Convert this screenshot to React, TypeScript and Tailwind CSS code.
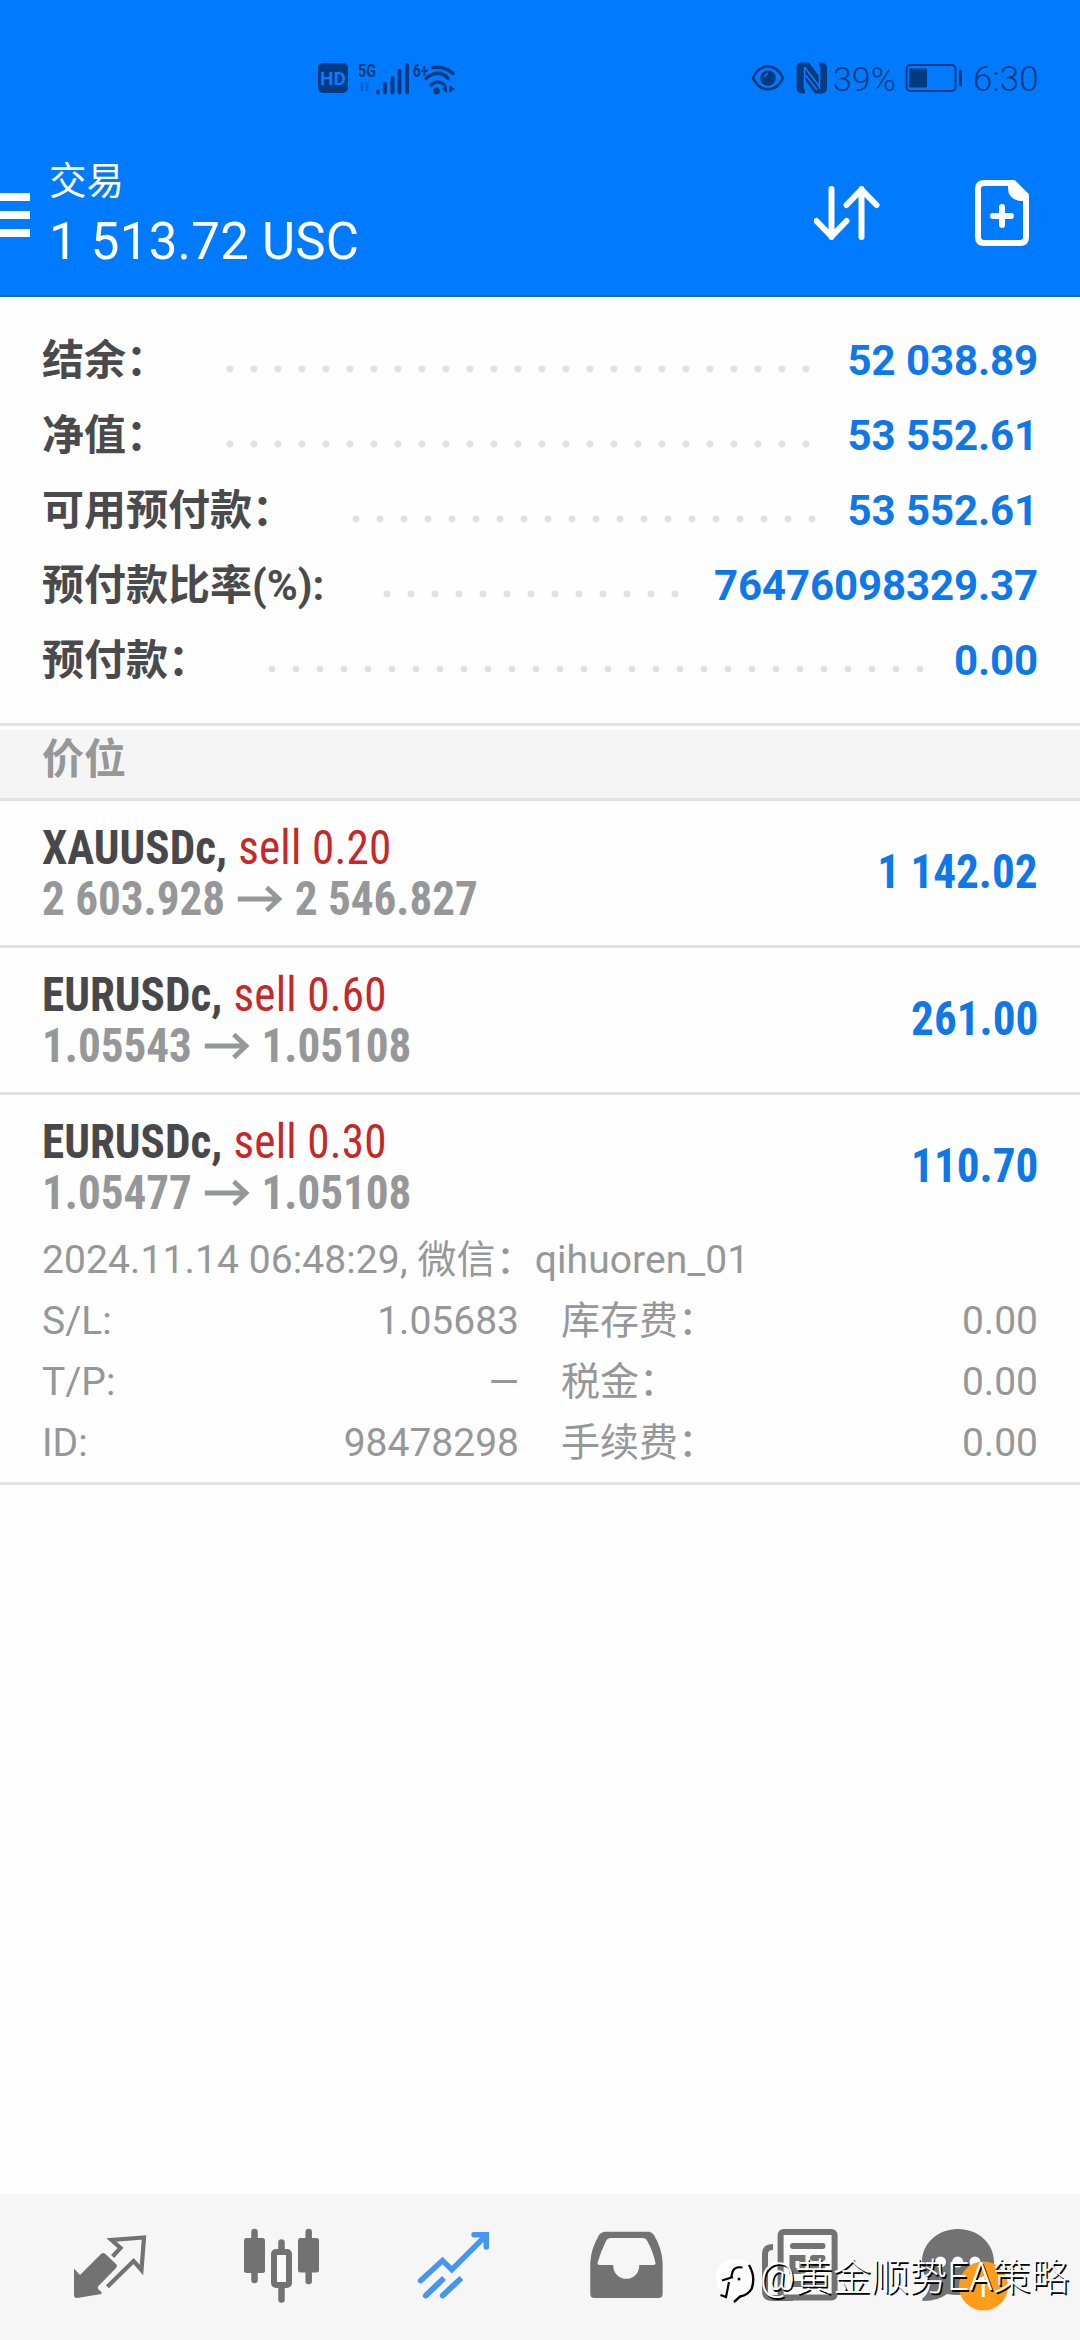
/**
 * TradeScreen - open positions view of a mobile trading terminal
 * Header with floating profit, account summary, positions list, bottom tabs.
 */

import type { ReactNode } from 'react'

interface SummaryItem {
  label: string
  value: string
  labelClass: string
  dots: number
}

interface Position {
  symbol: string
  side: string
  open: string
  current: string
  profit: string
}

const SUMMARY: SummaryItem[] = [
  { label: '结余：', value: '52 038.89', labelClass: 'w-[176px]', dots: 25 },
  { label: '净值：', value: '53 552.61', labelClass: 'w-[176px]', dots: 25 },
  { label: '可用预付款：', value: '53 552.61', labelClass: 'w-[302px]', dots: 20 },
  { label: '预付款比率(%):', value: '76476098329.37', labelClass: 'w-[333px]', dots: 13 },
  { label: '预付款：', value: '0.00', labelClass: 'w-[218px]', dots: 28 }
]

const POSITIONS: Position[] = [
  { symbol: 'XAUUSDc,', side: 'sell 0.20', open: '2 603.928', current: '2 546.827', profit: '1 142.02' },
  { symbol: 'EURUSDc,', side: 'sell 0.60', open: '1.05543', current: '1.05108', profit: '261.00' },
  { symbol: 'EURUSDc,', side: 'sell 0.30', open: '1.05477', current: '1.05108', profit: '110.70' }
]

const DETAILS = [
  ['S/L:', '1.05683', '库存费：', '0.00'],
  ['T/P:', '—', '税金：', '0.00'],
  ['ID:', '98478298', '手续费：', '0.00']
]

function StatusBar() {
  return (
    <div className="flex h-[156px] items-center text-[#043a80]">
      <div className="ml-[318px] flex h-[30px] w-[30px] items-center justify-center rounded-[5px] bg-[#043a80] text-[19px] font-bold leading-none text-[#0a7aff]">
        HD
      </div>
      <svg className="ml-[8px]" width="108" height="36" viewBox="0 0 108 36" fill="none" stroke="currentColor">
        <text x="2" y="17" fontSize="18" fontWeight="700" fill="currentColor" stroke="none" textLength="18" lengthAdjust="spacingAndGlyphs">5G</text>
        <path d="M6 22v9M11 22v9" strokeWidth="3" opacity=".35" />
        <path d="M22 31.500v1M29 24v8.500M36.500 18v14.500M43.500 11v21.500M51 5v27.500" strokeWidth="4" strokeLinecap="round" />
        <text x="57" y="17" fontSize="19" fontWeight="700" fill="currentColor" stroke="none" textLength="15" lengthAdjust="spacingAndGlyphs">6+</text>
        <path d="M77 7.500c8-1 15 1.500 20 6M70 18.500c7-7 17-7 22 0M75 25c4-4 9-4 13-.5" strokeWidth="3.500" strokeLinecap="round" />
        <circle cx="80.500" cy="31" r="3.500" fill="currentColor" stroke="none" />
        <path d="M91 25v8l-5-4zM93 25v8l6-4z" fill="currentColor" stroke="none" />
      </svg>
      <svg className="ml-[287px]" width="34" height="28" viewBox="0 0 34 28" fill="none" stroke="currentColor" strokeWidth="2.600">
        <path d="M2 14C9 -1.500 25 -1.500 32 14C25 29 9 29 2 14Z" />
        <circle cx="17" cy="14" r="6.500" fill="currentColor" />
        <path d="M13.500 13c.5-2 1.500-3 3.500-3.500" stroke="#0a7aff" strokeWidth="1.500" />
      </svg>
      <svg className="ml-[11px]" width="32" height="32" viewBox="0 0 32 32">
        <path d="M5 .5h8L23 14V.5h4q4 2 4 5v21q0 4-4 5h-8L9 18v13.500H5q-4.500-1-4.500-5v-21q0-4 4.500-5z" fill="currentColor" />
        <path d="M8.500 5v22M8.500 5L23 24M9.500 13L21 28M23.500 27V4" stroke="#0a7aff" strokeWidth="1.600" fill="none" />
      </svg>
      <span className="ml-[5px] w-[72px] whitespace-nowrap pt-[2px] text-[34px] font-[350] leading-none">39%</span>
      <svg width="58" height="30" viewBox="0 0 58 30" fill="none">
        <rect x="1.500" y="2" width="49" height="26" rx="4" stroke="currentColor" strokeWidth="2" />
        <rect x="4" y="5.500" width="18" height="19" rx="1" fill="currentColor" />
        <path d="M55.500 8v14" stroke="currentColor" strokeWidth="3" strokeLinecap="round" />
      </svg>
      <span className="ml-[10px] whitespace-nowrap pt-[2px] text-[35px] font-[350] leading-none">6:30</span>
    </div>
  )
}

function Header() {
  return (
    <header className="flex h-[297px] flex-col border-b-2 border-[#1f66bd] bg-[#007aff]">
      <StatusBar />
      <div className="flex text-white">
        <div className="mt-[37px] flex w-[30px] flex-col gap-[10px]">
          <div className="h-2 bg-white" />
          <div className="h-2 bg-white" />
          <div className="h-2 bg-white" />
        </div>
        <div className="ml-[19px] flex w-[765px] flex-col">
          <span className="text-[37.5px] leading-[51px]">交易</span>
          <span className="mt-[2px] whitespace-nowrap text-[51px] leading-[66px] tracking-[0.25px]">1 513.72 USC</span>
        </div>
        <svg className="mt-[24px]" width="66" height="66" viewBox="0 0 66 66" fill="none" stroke="currentColor" strokeWidth="6" strokeLinecap="round" strokeLinejoin="round">
          <path d="M17 9v48M2 41l15 15.500L32 41M47 57V9M32 25L47 9.500L62 25" transform="translate(0.5 0)" />
        </svg>
        <svg className="ml-[95px] mt-[24px]" width="54" height="66" viewBox="0 0 54 66" fill="none" stroke="currentColor" strokeWidth="6">
          <path d="M9 3h29.500L51 15.500V57q0 6-6 6H9q-6 0-6-6V9q0-6 6-6z" />
          <path d="M33 3h6l14 13v5H45Q33 19 33 8z" fill="currentColor" stroke="none" />
          <path d="M18 36h18M27 27v18" strokeLinecap="round" />
        </svg>
      </div>
    </header>
  )
}

function SummaryRow({ label, value, labelClass, dots }: SummaryItem) {
  return (
    <div className="flex h-[75px] items-center pl-[42px] pr-[42px] text-[42px] font-bold leading-[75px]">
      <span className={`shrink-0 whitespace-nowrap text-[#4a4a4c] ${labelClass}`}>{label}</span>
      <div
        className="mt-[16px] h-2 shrink-0 bg-[radial-gradient(circle,#e1e1e1_3px,transparent_4px)] bg-[length:24px_8px]"
        style={{ width: dots * 24 }}
      />
      <span className="ml-auto whitespace-nowrap tracking-[-0.1px] text-[#0f78e8]">{value}</span>
    </div>
  )
}

function PositionRow({ position, children }: { position: Position; children?: ReactNode }) {
  return (
    <div className="border-b-[3px] border-[#e2e2e2] px-[42px] pt-[21px]">
      <div className="flex items-center justify-between font-['Roboto_Condensed','Roboto'] text-[48px] leading-[51px] [font-stretch:75%]">
        <div className="flex origin-left scale-x-[0.94] flex-col whitespace-nowrap">
          <div className="flex gap-[12px]">
            <span className="font-bold text-[#48484a]">{position.symbol}</span>
            <span className="tracking-[0.2px] text-[#c62828]">{position.side}</span>
          </div>
          <div className="flex items-center font-bold text-[#959798]">
            <span>{position.open}</span>
            <svg className="mx-[13px]" width="48" height="26" viewBox="0 0 48 26" fill="none" stroke="currentColor" strokeWidth="5">
              <path d="M0 13h44M31 1.500L44 13L31 24.500" />
            </svg>
            <span>{position.current}</span>
          </div>
        </div>
        <span className="origin-right scale-x-[0.94] whitespace-nowrap pb-[3px] font-bold text-[#0f78e8]">
          {position.profit}
        </span>
      </div>
      {children ?? <div className="h-[21px]" />}
    </div>
  )
}

function PositionDetails() {
  return (
    <div className="pb-[8px] pt-[12px] text-[39px] leading-[61px] text-[#959798]">
      <div className="whitespace-nowrap tracking-[0.1px]">2024.11.14 06:48:29, 微信：qihuoren_01</div>
      {DETAILS.map(([name, value, feeName, fee]) => (
        <div key={name} className="flex">
          <div className="flex w-[477px] justify-between">
            <span>{name}</span>
            <span>{value}</span>
          </div>
          <div className="ml-[42px] flex flex-1 justify-between">
            <span>{feeName}</span>
            <span>{fee}</span>
          </div>
        </div>
      ))}
    </div>
  )
}

function TabBar() {
  return (
    <nav className="relative flex h-[146px] bg-[#f6f6f7] px-[24px] pt-[28px] text-[#727272]">
      {/* Quotes */}
      <div className="flex w-[172px] justify-center">
        <svg width="80" height="84" viewBox="0 0 80 84" fill="none">
          <path d="M4 46.500L10 53L31 32Q33 30 35.500 32L46.500 42.500Q47.500 44.500 46 46L28 64.500Q27.500 66 28.500 67.500L31.500 70V72L7 76Q4 76 4 73Z" fill="currentColor" />
          <path d="M42.600 34.500L50.500 26L41.500 18L74 15.500L71.500 48L63.600 39L37.400 64.700" stroke="currentColor" strokeWidth="4.200" />
        </svg>
      </div>
      {/* Charts */}
      <div className="flex w-[172px] justify-center">
        <svg width="80" height="84" viewBox="0 0 80 84" fill="none" stroke="currentColor">
          <path d="M12.500 10v48M39.500 20.500v10M39.500 62v15.500M66.700 10v49" strokeWidth="6.500" strokeLinecap="round" />
          <rect x="2" y="16" width="21" height="35" rx="2.500" fill="currentColor" stroke="none" />
          <rect x="56" y="16" width="21" height="34.500" rx="2.500" fill="currentColor" stroke="none" />
          <rect x="32" y="30" width="15" height="33" rx="2" fill="#fafafa" strokeWidth="6" />
        </svg>
      </div>
      {/* Trade, active tab */}
      <div className="flex w-[172px] justify-center text-[#4596f0]">
        <svg width="80" height="84" viewBox="0 0 80 84" fill="none" stroke="currentColor" strokeWidth="5.500">
          <path d="M6.500 58.700L28.500 38.500L37.800 47.700L72 13.500" strokeLinecap="round" />
          <path d="M60 12.700H72.300V25" strokeLinecap="round" />
          <path d="M11.600 73.700L30 56M28.500 73.700L47.400 56" />
          <path d="M11.600 73.700L25 61M28.500 73.700L42 61" strokeLinecap="round" />
        </svg>
      </div>
      {/* History */}
      <div className="flex w-[172px] justify-center">
        <svg width="80" height="84" viewBox="0 0 80 84">
          <path
            d="M20 9.700H63Q66 10 68 13Q76 27 76.600 40V72Q76.600 76 72.500 76H8.500Q4.300 76 4.300 72V40Q5 27 13 13Q15 10 20 9.700ZM24 16Q21 16.500 20 19Q15 29 11.500 41Q11.500 43 13.500 43H27.300V45A13 13 0 0 0 53.200 45V43H67.500Q70 43 69.500 41Q67 29 61 18.500Q60 16 57 16Z"
            fill="currentColor"
            fillRule="evenodd"
          />
        </svg>
      </div>
      {/* News */}
      <div className="flex w-[172px] justify-center">
        <svg width="80" height="84" viewBox="0 0 80 84" fill="none" stroke="currentColor" strokeWidth="6">
          <rect x="22.600" y="10" width="54" height="65.500" rx="3" fill="#fafafa" />
          <path d="M15 25q-8 0-8 7v38q0 6 8 6h20" />
          <path d="M35 24h29.500M55 36h9.500M55 46h9.500M35 62h29.500" strokeLinecap="round" />
          <rect x="34.500" y="36" width="10" height="13" />
        </svg>
      </div>
      {/* Chat with unread badge */}
      <div className="flex w-[172px] justify-center">
        <svg width="110" height="92" viewBox="0 0 110 92">
          <path d="M43 7C63 7 79 21 79 40S63 73 43 73Q37 73 32 72Q23 79 9 79Q6 79 8 76Q14 71 15 62Q7 53 7 40C7 21 23 7 43 7Z" fill="currentColor" />
          <g fill="#fff">
            <circle cx="25.500" cy="40" r="5.500" />
            <circle cx="42.700" cy="40" r="5.500" />
            <circle cx="60" cy="40" r="5.500" />
          </g>
          <circle cx="68.500" cy="64" r="24.500" fill="#ff9d1b" />
          <text x="67.500" y="75" fontSize="30" fill="#fff" textAnchor="middle">1</text>
        </svg>
      </div>

      {/* Channel watermark laid over the tabs */}
      <div className="absolute left-[714px] top-[57px] flex items-center">
        <svg width="44" height="52" viewBox="0 0 44 52" fill="none">
          <path d="M21 8Q40 7 40 26Q40 42 27 44L20 49L18 45Q2 44 2 27Q3 9 21 8Z" fill="#fff" />
          <path d="M28.500 16.500Q19 15 18 23L17 27M8 29.500L19 26M15 31L12 46L6.500 44" stroke="#000" strokeWidth="2.200" />
          <path d="M35 14Q42 26 37.500 38Q34 44 26 45.500L20 51" stroke="#000" strokeWidth="2.400" />
          <circle cx="25" cy="28" r="1.500" fill="#000" />
        </svg>
        <span className="ml-[2px] whitespace-nowrap text-[38px] font-light leading-[44px] tracking-[0.1px] text-white [text-shadow:1.500px_1.500px_0_#000]">
          @黄金顺势EA策略
        </span>
      </div>
    </nav>
  )
}

export default function App() {
  return (
    <div className="flex h-[2340px] w-[1080px] flex-col overflow-hidden bg-[#fefefe] font-['Roboto','Noto_Sans_CJK_SC',sans-serif]">
      <Header />

      <section className="pb-[25px] pt-[26px]">
        {SUMMARY.map((item) => (
          <SummaryRow key={item.label} {...item} />
        ))}
      </section>

      <div className="border-y-[3px] border-[#e2e2e2] pt-1">
        <div className="h-[68px] bg-[#f5f5f6] pl-[42px] text-[42px] font-bold leading-[60px] text-[#969798]">价位</div>
      </div>

      <main className="flex-1">
        <PositionRow position={POSITIONS[0]} />
        <PositionRow position={POSITIONS[1]} />
        <PositionRow position={POSITIONS[2]}>
          <PositionDetails />
        </PositionRow>
      </main>

      <TabBar />
    </div>
  )
}
